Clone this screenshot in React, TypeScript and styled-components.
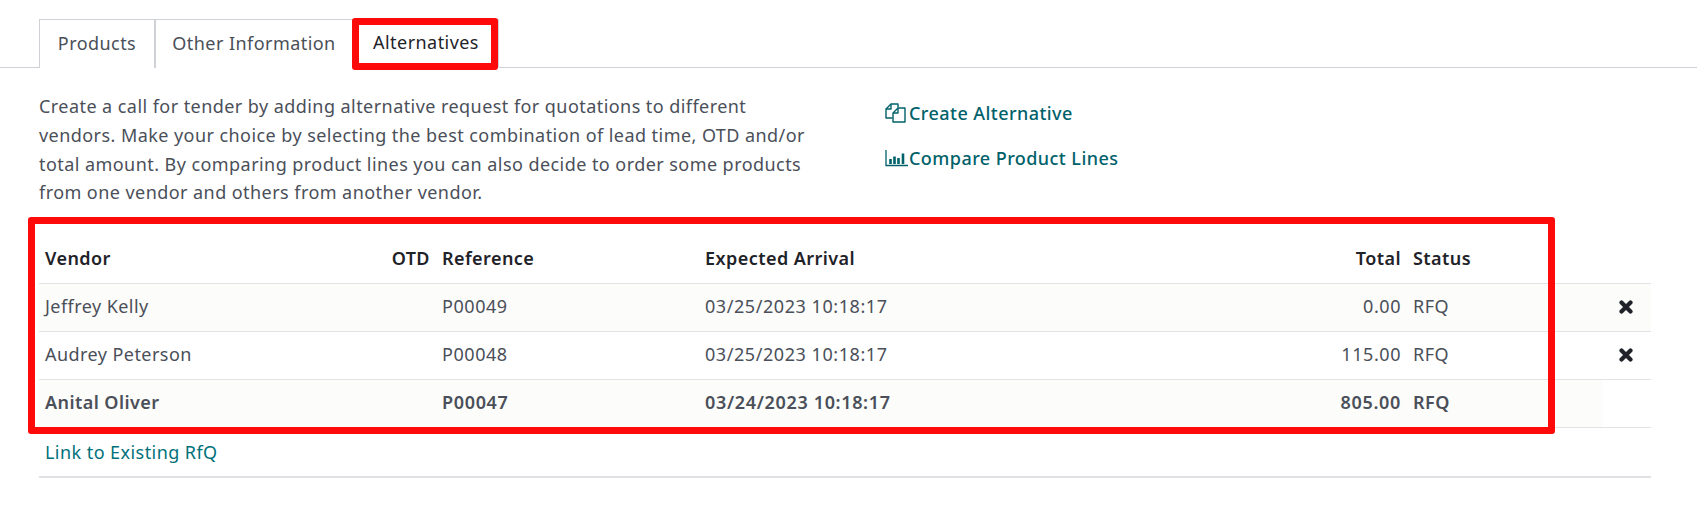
import React from "react";
import styled, { createGlobalStyle } from "styled-components";

const Global = createGlobalStyle`
  html, body { margin: 0; padding: 0; background: #fff; }
  body { font-family: "Noto Sans", "Open Sans", sans-serif; font-size: 18px; letter-spacing: 0.44px; color: #4a4f59; }
`;

const Page = styled.div`
  width: 1697px;
  height: 512px;
  overflow: hidden;
  padding-top: 19px;
  box-sizing: border-box;
`;

const TabBar = styled.div`
  display: flex;
  height: 48px;
  padding-left: 39px;
  border-bottom: 1px solid #ced1d6;
`;

const Tab = styled.div<{ $w: number; $active?: boolean }>`
  position: relative;
  width: ${(p) => p.$w}px;
  height: 49px;
  box-sizing: border-box;
  display: flex;
  align-items: center;
  justify-content: center;
  padding-bottom: 3px;
  color: ${(p) => (p.$active ? "#1f2329" : "#4a4f59")};
  background: #fff;
  border: 1px solid #ced1d6;
  border-bottom: ${(p) => (p.$active ? "1px solid #fff" : "0")};
`;

const TabMark = styled.span`
  position: absolute;
  left: -2px;
  top: -2px;
  right: 0;
  bottom: -3px;
  border: 7px solid #ff0a0a;
  border-radius: 3px;
`;

const Intro = styled.div`
  display: grid;
  grid-template-columns: 846px auto;
  padding: 24px 0 0 39px;
  height: 149px;
  box-sizing: border-box;
`;

const Help = styled.p`
  margin: 0;
  width: 800px;
  line-height: 28.8px;
  white-space: pre-line;
`;

const Actions = styled.div`
  display: flex;
  flex-direction: column;
  gap: 16px;
  padding-top: 6px;
`;

const Action = styled.a`
  display: flex;
  align-items: center;
  height: 29px;
  color: #00616a;
  font-weight: 500;
`;

const ActionIcon = styled.svg`
  width: 24px;
  height: 20px;
  flex: none;
  fill: none;
  stroke: currentColor;
`;

const TableWrap = styled.div`
  position: relative;
  margin-left: 39px;
  width: 1612px;
`;

const TableMark = styled.div`
  position: absolute;
  left: -11px;
  top: 0;
  width: 1527px;
  height: 217px;
  box-sizing: border-box;
  border: 7px solid #ff0a0a;
  border-radius: 3px;
  pointer-events: none;
`;

const Table = styled.table`
  width: 1612px;
  table-layout: fixed;
  border-collapse: collapse;
`;

const Row = styled.tr<{ $striped?: boolean; $bold?: boolean }>`
  height: 48px;
  border-bottom: 1px solid #e2e3e5;
  font-weight: ${(p) => (p.$bold ? 600 : 400)};
  & > td:not(:last-child) { background: ${(p) => (p.$striped ? "#fcfcfa" : "transparent")}; }
`;

const HeadRow = styled.tr`
  height: 66px;
  border-bottom: 1px solid #e2e3e5;
`;

const Head = styled.th<{ $right?: boolean }>`
  padding: 16px 6px 0;
  text-align: ${(p) => (p.$right ? "right" : "left")};
  font-weight: 600;
  color: #1f2329;
`;

const Cell = styled.td<{ $right?: boolean }>`
  padding: 0 6px 2px;
  text-align: ${(p) => (p.$right ? "right" : "left")};
`;

const Digits = styled.span<{ $bold?: boolean }>`
  letter-spacing: ${(p) => (p.$bold ? "0.66px" : "0.56px")};
`;

const RemoveCell = styled.td<{ $stripe?: boolean }>`
  background: ${(p) => (p.$stripe ? "#fcfcfa" : "transparent")};
  padding: 0;
`;

const Remove = styled.svg`
  display: block;
  width: 14px;
  height: 14px;
  margin: 0 0 0 17px;
  stroke: #1f2329;
  stroke-width: 4.2;
  stroke-linecap: round;
`;

const LinkRow = styled.div`
  height: 50px;
  padding: 0 6px;
  box-sizing: border-box;
  display: flex;
  align-items: center;
  border-bottom: 2px solid #e0e1e4;
  color: #00717a;
`;

const rows = [
  { vendor: "Jeffrey Kelly", ref: "P00049", date: "03/25/2023 10:18:17", total: "0.00", remove: true, striped: true },
  { vendor: "Audrey Peterson", ref: "P00048", date: "03/25/2023 10:18:17", total: "115.00", remove: true, striped: false },
  { vendor: "Anital Oliver", ref: "P00047", date: "03/24/2023 10:18:17", total: "805.00", remove: false, striped: true, bold: true },
];

export default function App() {
  return (
    <Page>
      <Global />
      <TabBar>
        <Tab $w={116}>Products</Tab>
        <Tab $w={198}>Other Information</Tab>
        <Tab $w={146} $active>Alternatives<TabMark /></Tab>
      </TabBar>
      <Intro>
        <Help>{"Create a call for tender by adding alternative request for quotations to different\nvendors. Make your choice by selecting the best combination of lead time, OTD and/or\ntotal amount. By comparing product lines you can also decide to order some products\nfrom one vendor and others from another vendor."}</Help>
        <Actions>
          <Action>
            <ActionIcon viewBox="0 0 24 20" strokeWidth="1.4" strokeLinejoin="round">
              <path d="M13 4.5V1H6L1 6V15H7.5" />
              <path d="M6 1V6H1" />
              <path d="M20 5H13L8 10V19H20Z" />
              <path d="M13 5V10H8" />
            </ActionIcon>
            Create Alternative
          </Action>
          <Action>
            <ActionIcon viewBox="0 0 24 20" strokeWidth="1.3">
              <path d="M1 2V17.5H23" />
              <path d="M5.5 16V11M9.5 16V8.5M13.5 16V10M18 16V5.5" strokeWidth="2.6" />
            </ActionIcon>
            Compare Product Lines
          </Action>
        </Actions>
      </Intro>
      <TableWrap>
        <Table>
          <colgroup>
            <col style={{ width: 340 }} />
            <col style={{ width: 57 }} />
            <col style={{ width: 263 }} />
            <col style={{ width: 300 }} />
            <col style={{ width: 408 }} />
            <col style={{ width: 195 }} />
            <col style={{ width: 49 }} />
          </colgroup>
          <thead>
            <HeadRow>
              <Head>Vendor</Head>
              <Head $right>OTD</Head>
              <Head>Reference</Head>
              <Head>Expected Arrival</Head>
              <Head $right>Total</Head>
              <Head>Status</Head>
              <Head />
            </HeadRow>
          </thead>
          <tbody>
            {rows.map((r) => (
              <Row key={r.ref} $striped={r.striped} $bold={r.bold}>
                <Cell>{r.vendor}</Cell>
                <Cell $right />
                <Cell><Digits $bold={r.bold}>{r.ref}</Digits></Cell>
                <Cell><Digits $bold={r.bold}>{r.date}</Digits></Cell>
                <Cell $right><Digits $bold={r.bold}>{r.total}</Digits></Cell>
                <Cell>RFQ</Cell>
                <RemoveCell $stripe={r.striped && r.remove}>
                  {r.remove && (
                    <Remove viewBox="0 0 14 14">
                      <path d="M2.5 2.5L11.5 11.5M11.5 2.5L2.5 11.5" />
                    </Remove>
                  )}
                </RemoveCell>
              </Row>
            ))}
          </tbody>
        </Table>
        <LinkRow>Link to Existing RfQ</LinkRow>
        <TableMark />
      </TableWrap>
    </Page>
  );
}
